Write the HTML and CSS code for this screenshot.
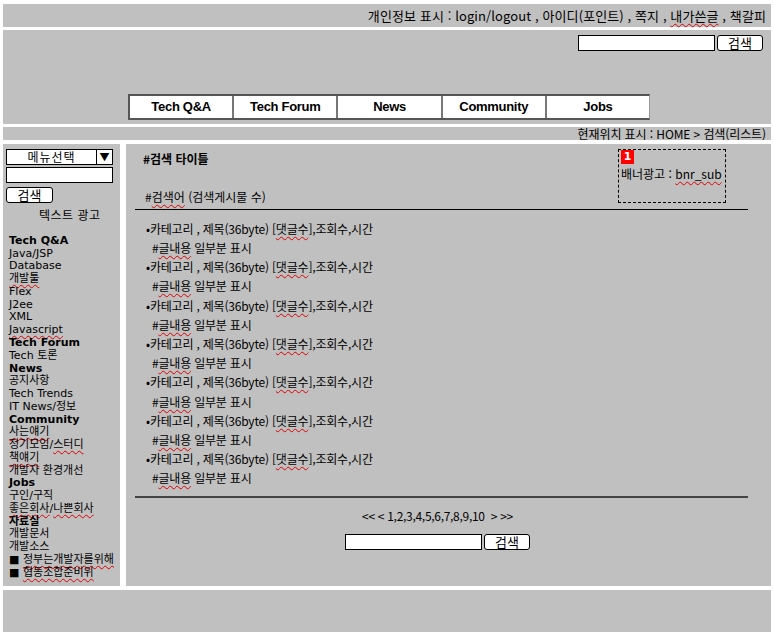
FILE: index.html
```html
<!DOCTYPE html>
<html lang="ko">
<head>
<meta charset="utf-8">
<title>검색 리스트</title>
<link rel="stylesheet" href="styles.css">
</head>
<body>
<div class="page">
  <div class="topbar">개인정보 표시 : login/logout , 아이디(포인트) , 쪽지 , <span class="sp">내가쓴글</span> , 책갈피</div>

  <div class="header">
    <div class="hsearch">
      <span class="inp hinp"></span><span class="btn hbtn">검색</span>
    </div>
    <div class="nav">
      <div class="navcell">Tech Q&amp;A</div>
      <div class="navcell">Tech Forum</div>
      <div class="navcell">News</div>
      <div class="navcell">Community</div>
      <div class="navcell">Jobs</div>
    </div>
  </div>

  <div class="crumb">현재위치 표시 : HOME &gt; 검색(리스트)</div>

  <div class="content">
    <div class="side">
      <div class="select"><span class="seltext">메뉴선택</span><span class="selarrow">▼</span></div>
      <div class="inp sinp"></div>
      <div class="btn sbtn">검색</div>
      <div class="textad">텍스트 광고</div>
      <ul class="menu">
        <li class="b">Tech Q&amp;A</li>
        <li>Java/JSP</li>
        <li>Database</li>
        <li><span class="sp">개발툴</span></li>
        <li>Flex</li>
        <li>J2ee</li>
        <li>XML</li>
        <li><span class="sp">Javascript</span></li>
        <li class="b">Tech Forum</li>
        <li>Tech 토론</li>
        <li class="b">News</li>
        <li>공지사항</li>
        <li>Tech Trends</li>
        <li>IT News/정보</li>
        <li class="b">Community</li>
        <li><span class="sp">사는얘기</span></li>
        <li>정기모임/<span class="sp">스터디</span></li>
        <li><span class="sp">책얘기</span></li>
        <li>개발자 환경개선</li>
        <li class="b">Jobs</li>
        <li>구인/구직</li>
        <li><span class="sp">좋은회사</span>/<span class="sp">나쁜회사</span></li>
        <li class="b">자료실</li>
        <li>개발문서</li>
        <li>개발소스</li>
        <li>■ <span class="sp">정부는개발자를위해</span></li>
        <li>■ <span class="sp">협동조합준비위</span></li>
      </ul>
    </div>

    <div class="main">
      <div class="mhead">
        <div class="mtitles">
          <div class="mtitle">#검색 타이틀</div>
          <div class="msub">#<span class="sp">검색어</span> (검색게시물 수)</div>
        </div>
        <div class="banner">
          <span class="badge">1</span>
          <div class="bantext">배너광고 : <span class="sp">bnr_sub</span></div>
        </div>
      </div>

      <ul class="list">
        <li class="row">•카테고리 , 제목(36byte) [<span class="sp">댓글수</span>],조회수,시간</li>
        <li class="sum">#<span class="sp">글내용</span> 일부분 표시</li>
        <li class="row">•카테고리 , 제목(36byte) [<span class="sp">댓글수</span>],조회수,시간</li>
        <li class="sum">#<span class="sp">글내용</span> 일부분 표시</li>
        <li class="row">•카테고리 , 제목(36byte) [<span class="sp">댓글수</span>],조회수,시간</li>
        <li class="sum">#<span class="sp">글내용</span> 일부분 표시</li>
        <li class="row">•카테고리 , 제목(36byte) [<span class="sp">댓글수</span>],조회수,시간</li>
        <li class="sum">#<span class="sp">글내용</span> 일부분 표시</li>
        <li class="row">•카테고리 , 제목(36byte) [<span class="sp">댓글수</span>],조회수,시간</li>
        <li class="sum">#<span class="sp">글내용</span> 일부분 표시</li>
        <li class="row">•카테고리 , 제목(36byte) [<span class="sp">댓글수</span>],조회수,시간</li>
        <li class="sum">#<span class="sp">글내용</span> 일부분 표시</li>
        <li class="row">•카테고리 , 제목(36byte) [<span class="sp">댓글수</span>],조회수,시간</li>
        <li class="sum">#<span class="sp">글내용</span> 일부분 표시</li>
      </ul>

      <div class="mfoot">
        <div class="pager">&lt;&lt; &lt; 1,2,3,4,5,6,7,8,9,10 &nbsp;&gt; &gt;&gt;</div>
        <div class="bsearch"><span class="inp binp"></span><span class="btn bbtn">검색</span></div>
      </div>
    </div>
  </div>

  <div class="footer"></div>
</div>
</body>
</html>
```

FILE: styles.css
```css
* { box-sizing: border-box; }
html, body { margin: 0; padding: 0; background: #fff; }
body {
  font-family: "Noto Sans CJK KR", "DejaVu Sans", sans-serif;
  font-size: 12px;
  color: #000;
}
ul { list-style: none; margin: 0; padding: 0; }

.page {
  width: 774px;
  height: 635px;
  padding: 4px 3px 3px 3px;
  display: flex;
  flex-direction: column;
}

.sp {
  text-decoration: underline wavy #e00000;
  text-decoration-thickness: 1px;
  text-underline-offset: 2px;
}

.topbar {
  background: #c0c0c0;
  height: 23px;
  line-height: 23px;
  text-align: right;
  padding-right: 5px;
  font-size: 13px;
  letter-spacing: 0.1px;
}

.header {
  background: #c0c0c0;
  height: 94px;
  margin-top: 3px;
  display: flex;
  flex-direction: column;
}
.hsearch {
  display: flex;
  justify-content: flex-end;
  padding: 5px 8px 0 0;
}
.inp {
  display: block;
  background: #fff;
  border: 1px solid #000;
  height: 16px;
}
.btn {
  display: flex;
  align-items: center;
  justify-content: center;
  background: #fff;
  border: 1px solid #000;
  border-radius: 3px;
  height: 16px;
  font-size: 13px;
  line-height: 14px;
}
.hinp { width: 137px; }
.hbtn { width: 46px; margin-left: 2px; }

.nav {
  margin: auto 0 4px 125px;
  width: 522px;
  height: 26px;
  display: flex;
  background: #fff;
  border-top: 2px solid #555;
  border-bottom: 2px solid #555;
  border-left: 2px solid #555;
  border-right: 1px solid #999;
}
.navcell {
  flex: 1;
  display: flex;
  align-items: center;
  justify-content: center;
  font-family: "Liberation Sans", "DejaVu Sans", sans-serif;
  font-weight: bold;
  font-size: 13px;
  letter-spacing: -0.3px;
  border-left: 2px solid #777;
}
.navcell:first-child { border-left: 0; }

.crumb {
  background: #c0c0c0;
  height: 13px;
  margin-top: 3px;
  line-height: 13px;
  text-align: right;
  padding-right: 5px;
  font-size: 12px;
  letter-spacing: -0.1px;
}

.content {
  display: flex;
  margin-top: 4px;
  height: 443px;
  gap: 6px;
}

.side {
  width: 117px;
  background: #c0c0c0;
  padding: 5px 0 0 3px;
}
.select {
  width: 107px;
  height: 16px;
  background: #fff;
  border: 1px solid #000;
  display: flex;
}
.seltext {
  flex: 1;
  text-align: center;
  line-height: 14px;
  font-size: 12px;
  letter-spacing: 1px;
}
.selarrow {
  width: 16px;
  border-left: 1px solid #000;
  text-align: center;
  font-size: 10px;
  line-height: 14px;
}
.sinp { width: 107px; margin-top: 2px; }
.sbtn { width: 47px; margin-top: 4px; }
.textad {
  margin: 4px 0 0 33px;
  font-size: 12px;
  line-height: 16px;
  letter-spacing: 0.5px;
}
.menu {
  margin-top: 12px;
  padding-left: 3px;
  font-family: "DejaVu Sans", "Noto Sans CJK KR", sans-serif;
  font-size: 11px;
}
.menu li {
  height: 12.78px;
  line-height: 12.78px;
  white-space: nowrap;
}
.menu li.b { font-weight: bold; }

.main {
  flex: 1;
  background: #c0c0c0;
  padding: 5px 23px 0 9px;
}
.mhead {
  display: flex;
  justify-content: space-between;
  align-items: flex-start;
  border-bottom: 1px solid #000;
  height: 61px;
}
.mtitle {
  margin: 3px 0 0 8px;
  font-weight: bold;
  line-height: 14px;
}
.msub {
  margin: 24px 0 0 10px;
  line-height: 14px;
}
.banner {
  width: 108px;
  height: 54px;
  margin-right: 22px;
  border: 1px dashed #000;
  padding: 0 0 0 2px;
}
.badge {
  display: block;
  width: 13px;
  height: 14px;
  background: #ff0000;
  color: #fff;
  font-family: "DejaVu Sans", sans-serif;
  font-weight: bold;
  font-size: 11px;
  line-height: 14px;
  text-align: center;
}
.bantext {
  margin-top: 3px;
  line-height: 14px;
  white-space: nowrap;
}

.list {
  margin-top: 9px;
  padding-left: 11px;
}
.list li {
  height: 19.2px;
  line-height: 19.2px;
  white-space: nowrap;
  letter-spacing: -0.2px;
}
.list li.sum { padding-left: 6px; }

.mfoot {
  margin-top: 9px;
  border-top: 2px solid #444;
  display: flex;
  flex-direction: column;
  align-items: center;
  padding-right: 8px;
}
.pager {
  margin-top: 11px;
  line-height: 14px;
  letter-spacing: -0.3px;
}
.bsearch {
  display: flex;
  margin-top: 11px;
}
.binp { width: 137px; }
.bbtn { width: 46px; margin-left: 2px; }

.footer {
  background: #c0c0c0;
  height: 42px;
  margin-top: 4px;
}
```
